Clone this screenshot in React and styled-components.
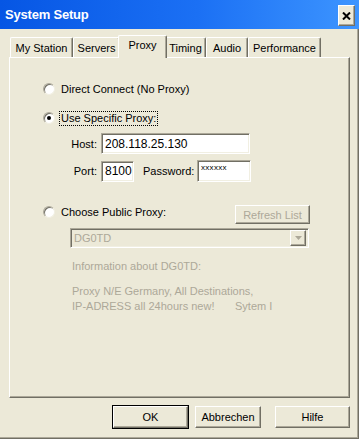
import React from "react";
import styled, { createGlobalStyle, css } from "styled-components";

const GlobalStyle = createGlobalStyle`
  html, body {
    margin: 0;
    padding: 0;
    background: #ece9d8;
  }
  * {
    box-sizing: border-box;
  }
`;

const raised = css`
  border: 1px solid;
  border-color: #ffffff #716f64 #716f64 #ffffff;
  box-shadow: inset -1px -1px 0 #aca899;
`;

const sunken = css`
  border: 1px solid;
  border-color: #aca899 #ffffff #ffffff #aca899;
  box-shadow: inset 1px 1px 0 #716f64, inset -1px -1px 0 #f1efe2;
`;

const Window = styled.div`
  width: 359px;
  height: 439px;
  display: flex;
  flex-direction: column;
  background: #ece9d8;
  font-family: "Liberation Sans", Arial, sans-serif;
  font-size: 11px;
  color: #000;
`;

const TitleBar = styled.div`
  height: 29px;
  flex: none;
  display: flex;
  align-items: flex-start;
  justify-content: space-between;
  background: linear-gradient(to right, #0656e4 0%, #1b70f4 55%, #3d95ff 100%);
`;

const Title = styled.span`
  margin: 7px 0 0 5px;
  color: #fff;
  font-weight: bold;
  font-size: 13px;
  letter-spacing: -0.2px;
`;

const CloseButton = styled.div`
  ${raised};
  width: 17px;
  height: 21px;
  margin: 5px 4px 0 0;
  background: #ece9d8;
  display: flex;
  align-items: center;
  justify-content: center;
`;

const Body = styled.div`
  flex: 1;
  display: flex;
  flex-direction: column;
  border-right: 1px solid #716f64;
  border-bottom: 1px solid #716f64;
  box-shadow: inset -1px -1px 0 #aca899;
`;

const TabStrip = styled.div`
  display: flex;
  align-items: flex-end;
  height: 22px;
  margin-top: 6px;
  padding-left: 10px;
`;

const Tab = styled.div`
  position: relative;
  height: 20px;
  width: ${(p) => p.$w}px;
  padding-top: 4px;
  text-align: center;
  background: #ece9d8;
  border-top: 1px solid #fff;
  border-left: 1px solid #fff;
  border-right: 1px solid #716f64;
  border-radius: 2px 2px 0 0;
  box-shadow: inset -1px 0 0 #aca899;
  ${(p) =>
    p.$active &&
    css`
      z-index: 1;
      height: 23px;
      margin: 0 -2px -1px;
      padding-top: 3px;
    `}
`;

const Panel = styled.div`
  width: 341px;
  height: 341px;
  margin-left: 9px;
  display: flex;
  flex-direction: column;
  padding: 23px 39px 0 33px;
  border: 1px solid;
  border-color: #fff #716f64 #716f64 #fff;
  box-shadow: inset -1px -1px 0 #aca899;
`;

const ChoiceRow = styled.div`
  display: flex;
  align-items: ${(p) => (p.$top ? "flex-start" : "center")};
  min-height: 16px;
  margin-top: ${(p) => p.$mt || 0}px;
`;

const RadioGroup = styled.div`
  display: flex;
  align-items: center;
  height: 16px;
`;

const Radio = styled.div`
  position: relative;
  width: 12px;
  height: 12px;
  border-radius: 50%;
  background: #fff;
  border: 1px solid;
  border-color: #aca899 #f1efe2 #f1efe2 #aca899;
  box-shadow: inset 1px 1px 0 #716f64;
  ${(p) =>
    p.$checked &&
    css`
      &::after {
        content: "";
        position: absolute;
        left: 3px;
        top: 3px;
        width: 4px;
        height: 4px;
        border-radius: 50%;
        background: #000;
      }
    `}
`;

const ChoiceLabel = styled.span`
  margin-left: 4px;
  padding: 0 1px;
  line-height: 13px;
  border: 1px dotted ${(p) => (p.$focus ? "#000" : "transparent")};
`;

const FieldRow = styled.div`
  display: flex;
  align-items: center;
  margin-top: ${(p) => p.$mt}px;
  margin-left: 17px;
`;

const FieldLabel = styled.span`
  width: ${(p) => p.$w || 37}px;
  margin-left: ${(p) => p.$ml || 0}px;
  margin-right: 4px;
  text-align: right;
`;

const TextBox = styled.input`
  ${sunken};
  width: ${(p) => p.$w}px;
  height: 21px;
  padding: 0 1px 0 3px;
  background: #fff;
  font-family: "Liberation Sans", Arial, sans-serif;
  font-size: 12px;
  color: #000;
  outline: none;
`;

const SecretBox = styled.div`
  ${sunken};
  width: 54px;
  height: 22px;
  padding: 2px 3px 0;
  background: #fff;
  font-size: 8px;
  letter-spacing: 0.3px;
`;

const Button = styled.div`
  ${raised};
  width: ${(p) => p.$w}px;
  height: ${(p) => p.$h || 22}px;
  margin-left: ${(p) => p.$ml || 0}px;
  display: flex;
  align-items: center;
  justify-content: center;
  background: #ece9d8;
  color: ${(p) => (p.$disabled ? "#aca899" : "#000")};
  ${(p) =>
    p.$default &&
    css`
      outline: 1px solid #000;
    `}
`;

const RefreshButton = styled(Button)`
  margin-left: auto;
  margin-top: 1px;
`;

const Combo = styled.div`
  ${sunken};
  width: 239px;
  height: 20px;
  margin: 4px 0 0 27px;
  display: flex;
  align-items: center;
  justify-content: space-between;
  padding: 0 2px 0 3px;
  color: #aca899;
`;

const ComboArrow = styled.div`
  ${raised};
  width: 16px;
  height: 16px;
  display: flex;
  align-items: center;
  justify-content: center;
  background: #ece9d8;
`;

const Info = styled.div`
  margin: ${(p) => p.$mt}px 0 0 29px;
  color: #aca899;
  line-height: ${(p) => p.$lh || 14}px;
  white-space: nowrap;
`;

const Spacer = styled.span`
  display: inline-block;
  width: 163px;
`;

const ButtonBar = styled.div`
  display: flex;
  justify-content: flex-end;
  align-items: center;
  gap: 7px;
  margin-top: 8px;
  padding-right: 8px;
`;

const tabs = [
  ["My Station", 63],
  ["Servers", 47],
  ["Proxy", 49],
  ["Timing", 41],
  ["Audio", 42],
  ["Performance", 73],
];

export default function App() {
  return (
    <>
      <GlobalStyle />
      <Window>
        <TitleBar>
          <Title>System Setup</Title>
          <CloseButton>
            <svg width="9" height="8" viewBox="0 0 9 8">
              <path d="M1 0.5 L8 7.5 M8 0.5 L1 7.5" stroke="#000" strokeWidth="2" />
            </svg>
          </CloseButton>
        </TitleBar>
        <Body>
          <TabStrip>
            {tabs.map(([name, w]) => (
              <Tab key={name} $w={w} $active={name === "Proxy"}>
                {name}
              </Tab>
            ))}
          </TabStrip>
          <Panel>
            <ChoiceRow>
              <RadioGroup>
                <Radio />
                <ChoiceLabel>Direct Connect (No Proxy)</ChoiceLabel>
              </RadioGroup>
            </ChoiceRow>
            <ChoiceRow $mt={13}>
              <RadioGroup>
                <Radio $checked />
                <ChoiceLabel $focus>Use Specific Proxy:</ChoiceLabel>
              </RadioGroup>
            </ChoiceRow>
            <FieldRow $mt={7}>
              <FieldLabel>Host:</FieldLabel>
              <TextBox $w={149} readOnly value="208.118.25.130" />
            </FieldRow>
            <FieldRow $mt={6}>
              <FieldLabel>Port:</FieldLabel>
              <TextBox $w={33} readOnly value="8100" />
              <FieldLabel $w={50} $ml={9}>
                Password:
              </FieldLabel>
              <SecretBox>xxxxxx</SecretBox>
            </FieldRow>
            <ChoiceRow $mt={22} $top>
              <RadioGroup>
                <Radio />
                <ChoiceLabel>Choose Public Proxy:</ChoiceLabel>
              </RadioGroup>
              <RefreshButton $w={75} $h={19} $disabled>
                Refresh List
              </RefreshButton>
            </ChoiceRow>
            <Combo>
              <span>DG0TD</span>
              <ComboArrow>
                <svg width="7" height="4" viewBox="0 0 7 4">
                  <path d="M0 0 H7 L3.5 4 Z" fill="#aca899" />
                </svg>
              </ComboArrow>
            </Combo>
            <Info $mt={11}>Information about DG0TD:</Info>
            <Info $mt={11} $lh={15}>
              Proxy N/E Germany, All Destinations,
              <br />
              <Spacer>IP-ADRESS all 24hours new!</Spacer>Sytem I
            </Info>
          </Panel>
          <ButtonBar>
            <Button $w={75} $default>
              OK
            </Button>
            <Button $w={66}>Abbrechen</Button>
            <Button $w={75} $ml={7}>
              Hilfe
            </Button>
          </ButtonBar>
        </Body>
      </Window>
    </>
  );
}
